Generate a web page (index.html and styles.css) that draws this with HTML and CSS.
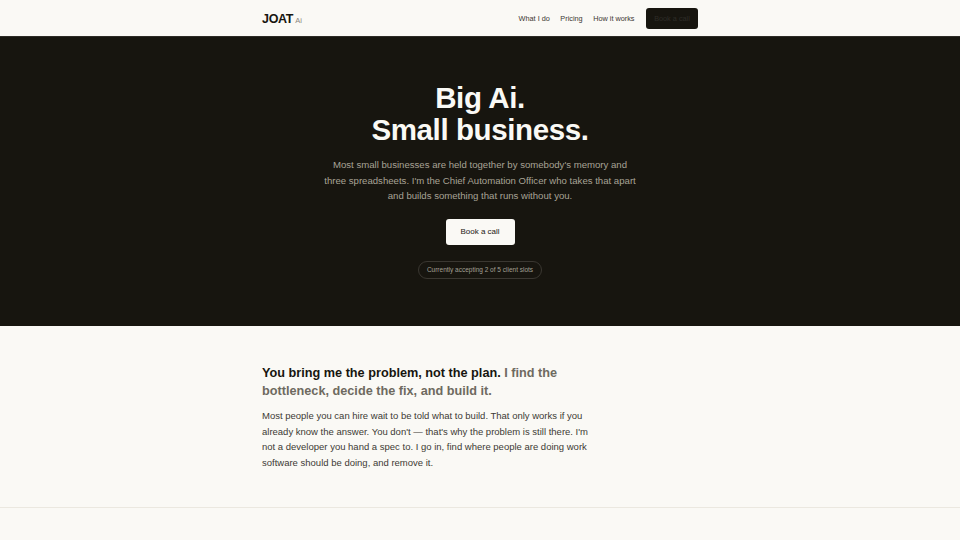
FILE: index.html
```html
<!DOCTYPE html>
<html lang="en">
<head>
<meta charset="utf-8">
<title>JOAT Ai</title>
<link rel="stylesheet" href="styles.css">
</head>
<body>
<header class="site-header">
  <div class="container header-inner">
    <a class="logo" href="#">JOAT<span class="logo-sub">Ai</span></a>
    <nav class="nav">
      <a href="#">What I do</a>
      <a href="#">Pricing</a>
      <a href="#">How it works</a>
      <a class="nav-btn" href="#">Book a call</a>
    </nav>
  </div>
</header>
<section class="hero">
  <div class="hero-inner">
    <h1 class="hero-title">Big Ai.<br>Small business.</h1>
    <p class="hero-text">Most small businesses are held together by somebody's memory and three spreadsheets. I'm the Chief Automation Officer who takes that apart and builds something that runs without you.</p>
    <a class="hero-btn" href="#">Book a call</a>
    <div class="pill">Currently accepting 2 of 5 client slots</div>
  </div>
</section>
<section class="intro">
  <div class="container">
    <h2 class="intro-title">You bring me the problem, not the plan. <span class="muted">I find the bottleneck, decide the fix, and build it.</span></h2>
    <p class="intro-text">Most people you can hire wait to be told what to build. That only works if you already know the answer. You don't — that's why the problem is still there. I'm not a developer you hand a spec to. I go in, find where people are doing work software should be doing, and remove it.</p>
  </div>
</section>
<section class="next"></section>
</body>
</html>
```
FILE: styles.css
```css
* { box-sizing: border-box; }
html, body { margin: 0; padding: 0; }
body {
  background: #faf9f5;
  font-family: "Liberation Sans", Arial, sans-serif;
  color: #1a1813;
}
a { text-decoration: none; color: inherit; }
.container { width: 436px; margin: 0 auto; }
.site-header {
  height: 37px;
  background: #faf9f5;
  border-bottom: 1px solid #2d2b26;
}
.header-inner {
  height: 36px;
  display: flex;
  align-items: center;
  justify-content: space-between;
}
.logo {
  font-weight: 700;
  font-size: 12.5px;
  letter-spacing: -0.3px;
  color: #17150f;
  display: flex;
  align-items: baseline;
  padding-top: 1px;
}
.logo-sub {
  font-weight: 400;
  font-size: 7.5px;
  color: #8a867c;
  margin-left: 2px;
  letter-spacing: 0;
}
.nav { display: flex; align-items: center; gap: 10.5px; font-size: 7.3px; color: #3a3731; }
.nav-btn {
  margin-left: 1px;
  background: #17150f;
  color: #2e2c27;
  height: 21px;
  width: 52px;
  border-radius: 3px;
  display: flex;
  align-items: center;
  justify-content: center;
}
.hero {
  background: #17150f;
  height: 289px;
  display: flex;
  justify-content: center;
}
.hero-inner {
  display: flex;
  flex-direction: column;
  align-items: center;
  padding-top: 45px;
  text-align: center;
}
.hero-title {
  margin: 0;
  font-size: 29.5px;
  line-height: 32px;
  font-weight: 700;
  color: #faf9f5;
  letter-spacing: -0.4px;
}
.hero-text {
  margin: 11px 0 0;
  width: 316px;
  font-size: 9.6px;
  line-height: 15.5px;
  color: #a8a396;
}
.hero-btn {
  margin-top: 15px;
  background: #faf9f5;
  color: #1a1813;
  font-size: 8px;
  width: 69px;
  height: 26px;
  border-radius: 3px;
  display: flex;
  align-items: center;
  justify-content: center;
}
.pill {
  margin-top: 16px;
  height: 18px;
  padding: 0 8px;
  border: 1px solid #3a3731;
  border-radius: 9px;
  font-size: 6.5px;
  color: #a4a095;
  display: flex;
  align-items: center;
}
.intro {
  padding: 38px 0 38px;
  border-bottom: 1px solid #ebe8e0;
  height: 182px;
}
.intro-title {
  margin: 0;
  width: 330px;
  font-size: 12.7px;
  line-height: 18px;
  font-weight: 700;
  color: #17150f;
}
.intro-title .muted { color: #6e6a60; }
.intro-text {
  margin: 8px 0 0;
  width: 332px;
  font-size: 9.5px;
  line-height: 15.7px;
  color: #3d3a34;
}
.next { height: 40px; }
```
